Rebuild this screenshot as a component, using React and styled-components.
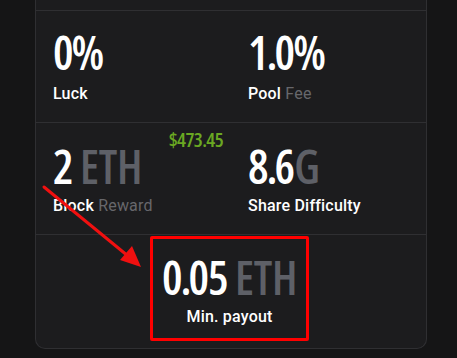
import React from "react";
import styled, { createGlobalStyle } from "styled-components";

const Global = createGlobalStyle`
  html, body { margin: 0; padding: 0; }
  body { background: #151516; font-family: Roboto, "Noto Sans", sans-serif; color: #fff; }
`;

const Page = styled.div`
  position: relative;
  width: 457px;
  height: 358px;
  padding-left: 35px;
  box-sizing: border-box;
  overflow: hidden;
`;

const Card = styled.div`
  width: 392px;
  box-sizing: border-box;
  background: #1c1c1e;
  border: 1px solid #2f2f32;
  border-top: none;
  border-radius: 0 0 10px 10px;
`;

const TopStub = styled.div`
  height: 10px;
  border-bottom: 1px solid #2f2f32;
`;

const Grid = styled.div`
  display: grid;
  grid-template-columns: 1fr 1fr;
`;

const Cell = styled.div`
  position: relative;
  height: 112px;
  box-sizing: border-box;
  border-bottom: 1px solid #2f2f32;
  padding: ${p => p.$top}px 0 0 17px;
  display: flex;
  flex-direction: column;
`;

const Value = styled.div`
  font-family: "Open Sans", sans-serif;
  font-stretch: 75%;
  font-weight: 560;
  font-size: 46px;
  line-height: 46px;
  letter-spacing: -1px;
  color: #fff;
  white-space: nowrap;
`;

const Dot = styled.span`
  margin: 0 -2px 0 -1px;
`;

const Pct = styled.span`
  margin-left: -1px;
  letter-spacing: 0;
`;

const Unit = styled.span`
  color: #5e6067;
  letter-spacing: -0.3px;
`;

const Label = styled.div`
  margin-top: ${p => p.$gap}px;
  font-size: 16px;
  line-height: 18px;
  font-weight: 500;
  letter-spacing: 0.2px;
  color: #fff;
  white-space: nowrap;
`;

const Dim = styled.span`
  color: #67676b;
  font-weight: 400;
`;

const Fiat = styled.div`
  position: absolute;
  top: 6px;
  right: 8px;
  font-family: "Open Sans", sans-serif;
  font-stretch: 75%;
  font-weight: 600;
  font-size: 20px;
  line-height: 22px;
  letter-spacing: -0.6px;
  color: #6aa822;
`;

const PayoutRow = styled.div`
  height: 112px;
  display: flex;
  justify-content: center;
  align-items: flex-start;
  padding: 1px 3px 0 0;
`;

const Highlight = styled.div`
  width: 159px;
  height: 105px;
  box-sizing: border-box;
  border: 3px solid #ff0000;
  border-radius: 2px;
  display: flex;
  flex-direction: column;
  align-items: center;
  padding-top: 15px;
`;

const Arrow = styled.svg`
  position: absolute;
  left: 0;
  top: 0;
  pointer-events: none;
`;

export default function App() {
  return (
    <Page>
      <Global />
      <Card>
        <TopStub />
        <Grid>
          <Cell $top={18}>
            <Value>0<Pct>%</Pct></Value>
            <Label $gap={10}>Luck</Label>
          </Cell>
          <Cell $top={18}>
            <Value>1<Dot>.</Dot>0<Pct>%</Pct></Value>
            <Label $gap={10}>Pool <Dim>Fee</Dim></Label>
          </Cell>
          <Cell $top={20}>
            <Value>2 <Unit>ETH</Unit></Value>
            <Label $gap={8}>Block <Dim>Reward</Dim></Label>
            <Fiat>$473.45</Fiat>
          </Cell>
          <Cell $top={20}>
            <Value>8<Dot>.</Dot>6<Unit>G</Unit></Value>
            <Label $gap={8}>Share Difficulty</Label>
          </Cell>
        </Grid>
        <PayoutRow>
          <Highlight>
            <Value>0<Dot>.</Dot>05 <Unit>ETH</Unit></Value>
            <Label $gap={8}>Min. payout</Label>
          </Highlight>
        </PayoutRow>
      </Card>
      <Arrow width="457" height="358" viewBox="0 0 457 358">
        <line x1="44" y1="187" x2="128" y2="256" stroke="#f01010" strokeWidth="3" strokeLinecap="round" />
        <polygon points="141,267 120,260 132,246" fill="#f01010" />
      </Arrow>
    </Page>
  );
}
